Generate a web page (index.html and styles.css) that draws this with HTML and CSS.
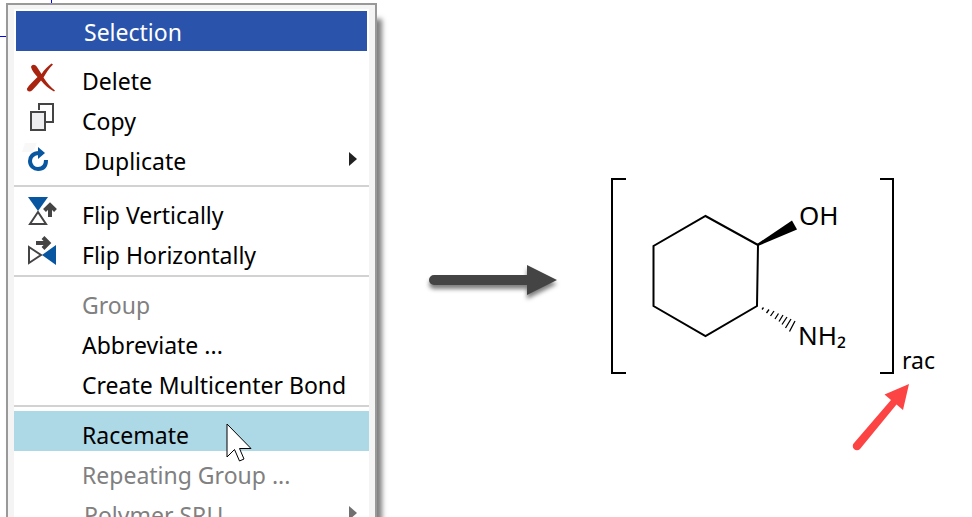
FILE: index.html
```html
<!DOCTYPE html>
<html lang="en">
<head>
<meta charset="utf-8">
<title>Selection menu</title>
<link rel="stylesheet" href="styles.css">
</head>
<body>
<main class="page">
  <span class="bond-h"></span>
  <span class="bond-v"></span>
  <nav class="menu" aria-label="Selection">
    <div class="menu-body">
      <h1 class="menu-title">Selection</h1>
      <ul class="group group-first">
        <li><button class="item" type="button">
          <svg class="icon" viewBox="0 0 32 32"><path fill="#a82410" d="M9 5C10 2 13 2 15 5L19.500 12C22 8 26 4 29.500 1.500L31 2.500C27 6.500 24 11 21.500 15.500C25 21 29 25.500 33 28.500L32 29.500C27 27 22.500 23 19 18.500C16 22 13 25.500 10 28.500C8 30.500 4.500 29.500 5 26.500C7 23 11.500 19 15.500 15C13 12 9.500 8.500 9 5Z"/></svg>
          <span>Delete</span></button></li>
        <li><button class="item" type="button">
          <svg class="icon" viewBox="0 0 32 32"><path fill="#fff" stroke="#444" stroke-width="2" d="M17 8V2H31V20H24"/><path fill="#eeeef0" stroke="#444" stroke-width="2" d="M9 10H23V28H9Z"/></svg>
          <span>Copy</span></button></li>
        <li><button class="item submenu" type="button">
          <svg class="icon" viewBox="0 0 32 32"><path fill="#f7f8f7" d="M3 1H15L11 10H0Z"/><path fill="none" stroke="#0855a0" stroke-width="4" d="M17 11C11 11 8 15 8 19C8 24 12 27 16 27C21 27 24 24 24 18"/><path fill="#0855a0" d="M16 5L23 11L16 17Z"/></svg>
          <span>Duplicate</span>
          <svg class="more" viewBox="0 0 8 14"><path d="M0 0V14L8 7Z"/></svg></button></li>
      </ul>
      <ul class="group">
        <li><button class="item" type="button">
          <svg class="icon" viewBox="0 0 32 32"><path fill="#0855a0" d="M6 1H26L16 15Z"/><path fill="#fff" stroke="#444" stroke-width="2" d="M16 16L24 28H8Z"/><path fill="none" stroke="#444" stroke-width="4" d="M28 21V11M22.500 14.500L28 9L33.500 14.500"/></svg>
          <span>Flip Vertically</span></button></li>
        <li><button class="item" type="button">
          <svg class="icon" viewBox="0 0 32 32"><path fill="#0855a0" d="M20 19L34 9V29Z"/><path fill="#fff" stroke="#444" stroke-width="2" d="M7 11V27L19 19Z"/><path fill="none" stroke="#444" stroke-width="4" d="M14 7H26M21 1.500L26.500 7L21 12.500"/></svg>
          <span>Flip Horizontally</span></button></li>
      </ul>
      <ul class="group">
        <li><button class="item" type="button" disabled>Group</button></li>
        <li><button class="item" type="button">Abbreviate ...</button></li>
        <li><button class="item" type="button">Create Multicenter Bond</button></li>
      </ul>
      <ul class="group">
        <li><button class="item active" type="button">Racemate
          <svg class="cursor" viewBox="0 0 27 40"><path fill="#fff" stroke="#000" d="M1 1V34L8.500 26.500L13.500 38L18 36L13.500 25.500H25Z"/></svg></button></li>
        <li><button class="item" type="button" disabled>Repeating Group ...</button></li>
        <li><button class="item submenu" type="button" disabled><span>Polymer SRU</span>
          <svg class="more" viewBox="0 0 8 14"><path d="M0 0V14L8 7Z"/></svg></button></li>
      </ul>
    </div>
  </nav>
  <section class="result">
    <svg class="arrow" viewBox="420 255 150 50" aria-hidden="true">
      <g fill="#444"><path d="M434 275H527V265L557 280L527 295V285H434A5 5 0 0 1 434 275Z"/></g>
    </svg>
    <svg class="molecule" viewBox="604 105 340 350" role="img" aria-label="Racemic 2-aminocyclohexanol">
      <g fill="none" stroke="#000" stroke-width="2">
        <path d="M626 179H612V373H626M880 179H893V373H880"/>
        <path d="M758 245L705.500 216L653.500 246V306L705.500 336L757 306Z"/>
        <path stroke-width="1.300" d="M762 309.500L763.500 307.500M766.500 313L769 309.500M770.500 316L774 311M775 319L778.500 313.500M779 321.500L783 315M782 324.500L787 317M785.500 328L791 319M789.500 331.500L795 321"/>
      </g>
      <path d="M757 244L792 220.500L797 229.500L758 246Z"/>
      <g class="label">
        <text x="799" y="225">OH</text>
        <text x="798" y="345">NH₂</text>
        <text class="note" x="902" y="369">rac</text>
      </g>
      <path fill="#fc4444" d="M909 384L903 410L896.500 404.500L860 449A4 4 0 0 1 854 443L891 400L884.500 394.500Z"/>
    </svg>
  </section>
</main>
</body>
</html>
```
FILE: styles.css
```css
* {
  box-sizing: border-box;
}

body {
  margin: 0;
  background: #fff;
  color: #000;
  font-family: "Noto Sans", "Open Sans", sans-serif;
  font-size: 23px;
}

.page {
  position: relative;
  display: flex;
  align-items: flex-start;
  height: 100vh;
  overflow: hidden;
  padding: 3px 0 0 6px;
}

.bond-h,
.bond-v {
  position: absolute;
  background: #00f;
}

.bond-h {
  left: 0;
  top: 36px;
  width: 6px;
  height: 1px;
}

.bond-v {
  left: 51px;
  top: 0;
  width: 1px;
  height: 3px;
}

.menu {
  flex: none;
  border: 2px solid #999;
  padding: 4px 6px;
  background: #f4f4f4;
  box-shadow: 5px 16px 5px rgba(0, 0, 0, 0.5);
}

.menu-body {
  width: 355px;
  background: #fff;
}

.menu-title {
  margin: 0 2px;
  padding: 0 68px;
  height: 42px;
  border-top: 2px solid #fff;
  background: #2a54ab;
  color: #fff;
  font-size: 23px;
  font-weight: 400;
  line-height: 42px;
}

.group {
  margin: 0;
  padding: 4px 0;
  list-style: none;
}

.group + .group {
  border-top: 2px solid #d2d2d2;
}

.group-first {
  padding: 6px 0 8px;
}

.item {
  position: relative;
  display: flex;
  align-items: center;
  width: 100%;
  height: 40px;
  padding: 8px 12px 0 68px;
  border: 0;
  background: transparent;
  color: #000;
  font: inherit;
  line-height: 32px;
  text-align: left;
}

.item:disabled {
  color: #808080;
}

.submenu {
  padding-left: 70px;
}

.active {
  background: #add8e6;
}

.icon {
  position: absolute;
  left: 8px;
  top: 5px;
  width: 32px;
  height: 32px;
  overflow: visible;
}

.more {
  width: 8px;
  height: 14px;
  margin: 0 0 4px auto;
  fill: #222;
}

.item:disabled .more {
  fill: #707070;
}

.cursor {
  position: absolute;
  z-index: 1;
  left: 212px;
  top: 12px;
  width: 27px;
  height: 40px;
}

.result {
  display: flex;
  flex: 1;
  align-items: center;
  justify-content: space-between;
  align-self: stretch;
  padding: 40px 28px 0 43px;
}

.arrow {
  flex: none;
  width: 150px;
  height: 50px;
  overflow: visible;
  filter: drop-shadow(0 4px 2px rgba(0, 0, 0, 0.5));
}

.molecule {
  flex: none;
  width: 340px;
  height: 350px;
}

.label {
  font-size: 26px;
}

.note {
  font-size: 23px;
}
```
